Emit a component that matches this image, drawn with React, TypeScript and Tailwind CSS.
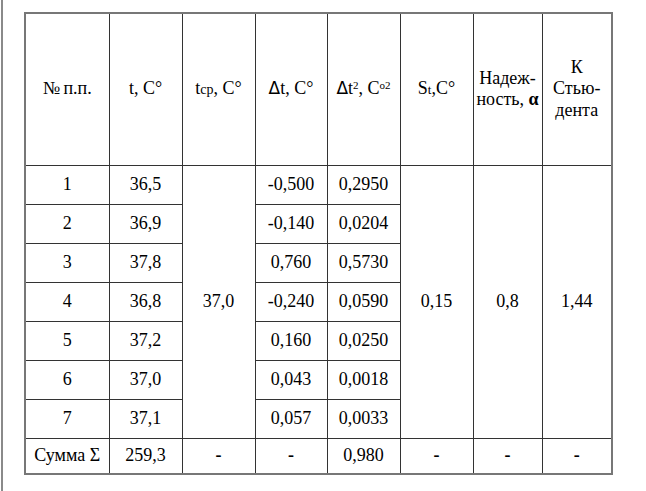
import React from "react";

const rows = [
  { n: "1", t: "36,5", dt: "-0,500", dt2: "0,2950" },
  { n: "2", t: "36,9", dt: "-0,140", dt2: "0,0204" },
  { n: "3", t: "37,8", dt: "0,760", dt2: "0,5730" },
  { n: "4", t: "36,8", dt: "-0,240", dt2: "0,0590" },
  { n: "5", t: "37,2", dt: "0,160", dt2: "0,0250" },
  { n: "6", t: "37,0", dt: "0,043", dt2: "0,0018" },
  { n: "7", t: "37,1", dt: "0,057", dt2: "0,0033" },
];

const cell = "border border-[#333] p-0 text-center align-middle";

export default function App() {
  return (
    <div className="flex h-[491px] w-[646px] bg-white font-['Liberation_Serif'] text-[18px] leading-[1.2] text-black">
      {/* page edge */}
      <div className="ml-px w-[2px] bg-[#8a8a8a]" />
      <div className="pl-[21px] pt-[12px]">
        <table className="w-[587px] table-fixed border-collapse border-2 border-[#777]">
          <colgroup>
            <col className="w-[84px]" />
            <col className="w-[73px]" />
            <col className="w-[73px]" />
            <col className="w-[72px]" />
            <col className="w-[73px]" />
            <col className="w-[73px]" />
            <col className="w-[69px]" />
            <col className="w-[70px]" />
          </colgroup>
          <thead>
            <tr className="h-[152px]">
              <th className={`${cell} font-normal`}>
                <span className="tracking-[-1px]">№</span> п.п.
              </th>
              <th className={`${cell} font-normal`}>t, С°</th>
              <th className={`${cell} font-normal`}>
                t<span className="text-[14px]">ср</span>, С°
              </th>
              <th className={`${cell} font-normal`}>
                <span className="font-['DejaVu_Sans'] text-[17px]">Δ</span>t, С°
              </th>
              <th className={`${cell} font-normal`}>
                <span className="font-['DejaVu_Sans'] text-[17px]">Δ</span>t
                <sup className="text-[11px]">2</sup>, С<sup className="text-[11px]">о2</sup>
              </th>
              <th className={`${cell} font-normal`}>
                S<span className="text-[13px]">t</span>,С°
              </th>
              <th className={`${cell} font-normal`}>
                Надеж-
                <br />
                ность, <span className="font-bold">α</span>
              </th>
              <th className={`${cell} font-normal`}>
                К
                <br />
                Стью-
                <br />
                дента
              </th>
            </tr>
          </thead>
          <tbody>
            {rows.map((r, i) => (
              <tr key={r.n} className="h-[39px]">
                <td className={cell}>{r.n}</td>
                <td className={cell}>{r.t}</td>
                {i === 0 && (
                  <td className={cell} rowSpan={7}>
                    37,0
                  </td>
                )}
                <td className={cell}>{r.dt}</td>
                <td className={cell}>{r.dt2}</td>
                {i === 0 && (
                  <>
                    <td className={cell} rowSpan={7}>
                      0,15
                    </td>
                    <td className={cell} rowSpan={7}>
                      0,8
                    </td>
                    <td className={cell} rowSpan={7}>
                      1,44
                    </td>
                  </>
                )}
              </tr>
            ))}
            <tr className="h-[36px]">
              <td className={cell}>Сумма Σ</td>
              <td className={cell}>259,3</td>
              <td className={`${cell} font-bold`}>-</td>
              <td className={`${cell} font-bold`}>-</td>
              <td className={cell}>0,980</td>
              <td className={`${cell} font-bold`}>-</td>
              <td className={`${cell} font-bold`}>-</td>
              <td className={`${cell} font-bold`}>-</td>
            </tr>
          </tbody>
        </table>
      </div>
    </div>
  );
}
